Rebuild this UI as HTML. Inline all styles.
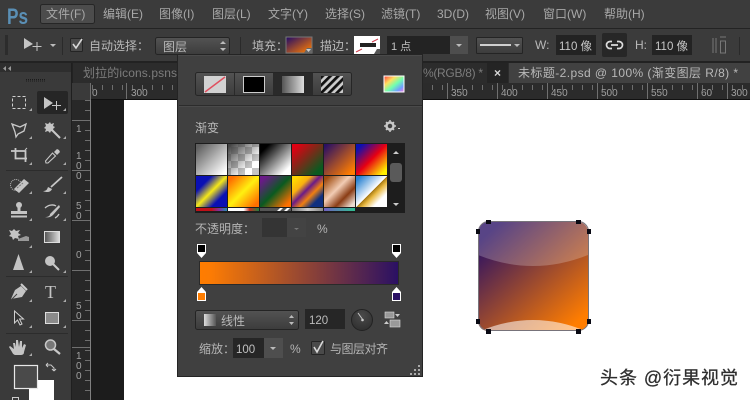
<!DOCTYPE html>
<html><head><meta charset="utf-8">
<style>
html,body{margin:0;padding:0;width:750px;height:400px;overflow:hidden;background:#fff}
svg{display:block}
text{font-family:"Liberation Sans","Noto Sans CJK SC",sans-serif}
.m{font-size:12px;fill:#a8a8a8}
.t{font-size:12px;fill:#b8b8b8}
.r{font-size:10px;fill:#a0a0a0}
.ic{fill:#c4c4c4}
</style></head><body>
<svg width="750" height="400" viewBox="0 0 750 400" xmlns="http://www.w3.org/2000/svg">
<defs>
<pattern id="tickH" x="92" y="0" width="10" height="18" patternUnits="userSpaceOnUse"><rect x="0" y="13" width="1" height="5" fill="#6e6e6e"/></pattern>
<pattern id="tickV" x="0" y="100" width="18" height="10" patternUnits="userSpaceOnUse"><rect x="13" y="0" width="5" height="1" fill="#6e6e6e"/></pattern>
<pattern id="chk" width="14" height="14" patternUnits="userSpaceOnUse"><rect width="14" height="14" fill="#fff"/><rect width="7" height="7" fill="#c4c4c4"/><rect x="7" y="7" width="7" height="7" fill="#c4c4c4"/></pattern>
<pattern id="hatch" width="5.500" height="5.500" patternUnits="userSpaceOnUse" patternTransform="rotate(45)"><rect width="5.500" height="5.500" fill="#ccc"/><rect width="2.800" height="5.500" fill="#111"/></pattern>
<linearGradient id="g1" x1="0" y1="0" x2="1" y2="1"><stop offset=".08" stop-color="#606060"/><stop offset=".92" stop-color="#fff"/></linearGradient>
<linearGradient id="g2" x1="0" y1="0" x2="1" y2="1"><stop offset=".05" stop-color="#444"/><stop offset=".72" stop-color="#444" stop-opacity="0"/></linearGradient>
<linearGradient id="g3" x1="0" y1="0" x2="1" y2="1"><stop offset=".15" stop-color="#000"/><stop offset=".85" stop-color="#fff"/></linearGradient>
<linearGradient id="g4" x1="0" y1="0" x2="1" y2="1"><stop offset=".1" stop-color="#e00012"/><stop offset=".85" stop-color="#0a5a20"/></linearGradient>
<linearGradient id="g5" x1="0" y1="0" x2="1" y2="1"><stop offset=".05" stop-color="#2a1064"/><stop offset=".9" stop-color="#ff7d00"/></linearGradient>
<linearGradient id="g6" x1="0" y1="0" x2="1" y2="1"><stop offset=".1" stop-color="#0a10b4"/><stop offset=".5" stop-color="#e80012"/><stop offset=".9" stop-color="#fff000"/></linearGradient>
<linearGradient id="g7b" x1="0" y1="0" x2="1" y2="1"><stop offset=".25" stop-color="#0a10b4"/><stop offset=".5" stop-color="#f5e818"/><stop offset=".75" stop-color="#0a10b4"/></linearGradient>
<linearGradient id="g8" x1="0" y1="0" x2="1" y2="1"><stop offset=".1" stop-color="#ff7000"/><stop offset=".5" stop-color="#fff010"/><stop offset=".9" stop-color="#ff7000"/></linearGradient>
<linearGradient id="g9" x1="0" y1="0" x2="1" y2="1"><stop offset=".1" stop-color="#6a1a88"/><stop offset=".5" stop-color="#0a5a20"/><stop offset=".9" stop-color="#ff7000"/></linearGradient>
<linearGradient id="g10" x1="0" y1="0" x2="1" y2="1"><stop offset=".1" stop-color="#ffd800"/><stop offset=".3" stop-color="#f8b010"/><stop offset=".46" stop-color="#6a1a88"/><stop offset=".62" stop-color="#f08010"/><stop offset=".8" stop-color="#103080"/><stop offset="1" stop-color="#103080"/></linearGradient>
<linearGradient id="g11" x1="0" y1="0" x2="1" y2="1"><stop offset=".08" stop-color="#a04c10"/><stop offset=".42" stop-color="#f2ccb4"/><stop offset=".68" stop-color="#8a3c14"/><stop offset=".92" stop-color="#ecdcd0"/></linearGradient>
<linearGradient id="g12" x1="0" y1="0" x2="1" y2="1"><stop offset=".08" stop-color="#2a82d2"/><stop offset=".5" stop-color="#fff"/><stop offset=".5" stop-color="#a07410"/><stop offset=".6" stop-color="#e8b840"/><stop offset=".78" stop-color="#fff"/></linearGradient>
<linearGradient id="barG"><stop offset="0" stop-color="#ff7d00"/><stop offset=".06" stop-color="#fb7b04"/><stop offset="1" stop-color="#2a1064"/></linearGradient>
<linearGradient id="shape" x1="1" y1="1" x2="0" y2="0"><stop offset=".05" stop-color="#ff7d00"/><stop offset=".95" stop-color="#2a1064"/></linearGradient>
<linearGradient id="shape2" x1=".92" y1=".95" x2=".1" y2=".05"><stop offset=".03" stop-color="#ff7d00"/><stop offset=".97" stop-color="#2a1064"/></linearGradient>
<linearGradient id="grayS" x1="0" x2="1"><stop offset="0" stop-color="#555"/><stop offset="1" stop-color="#ddd"/></linearGradient>
<linearGradient id="rainbow" x1="0" y1="0" x2="1" y2="1"><stop offset="0" stop-color="#ff3d3d"/><stop offset=".3" stop-color="#ffe060"/><stop offset=".55" stop-color="#70ffb0"/><stop offset=".8" stop-color="#70a0ff"/><stop offset="1" stop-color="#ff70e0"/></linearGradient>
<linearGradient id="btn" x1="0" y1="0" x2="0" y2="1"><stop offset="0" stop-color="#535353"/><stop offset="1" stop-color="#3c3c3c"/></linearGradient>
<linearGradient id="rb3" x1="0" x2="1"><stop offset="0" stop-color="#c01018"/><stop offset=".5" stop-color="#c01018"/><stop offset=".75" stop-color="#8030a0"/><stop offset="1" stop-color="#2090b0"/></linearGradient>
<linearGradient id="rb4" x1="0" x2="1"><stop offset="0" stop-color="#fff"/><stop offset=".5" stop-color="#fff"/><stop offset=".7" stop-color="#c03020"/><stop offset="1" stop-color="#208040"/></linearGradient>
<linearGradient id="rb6" x1="0" x2="1"><stop offset="0" stop-color="#777"/><stop offset=".5" stop-color="#ccc"/><stop offset="1" stop-color="#888"/></linearGradient>
<linearGradient id="rb7" x1="0" x2="1"><stop offset="0" stop-color="#7060c0"/><stop offset="1" stop-color="#30c090"/></linearGradient>
<clipPath id="shapeClip"><rect x="478" y="222" width="110" height="109" rx="10"/></clipPath>
<radialGradient id="dial" cx=".5" cy=".3" r=".8"><stop offset="0" stop-color="#4a4a4a"/><stop offset="1" stop-color="#2c2c2c"/></radialGradient>
</defs>

<rect width="750" height="400" fill="#3a3a3a"/>
<rect width="750" height="28" fill="#3b3b3b"/>
<rect y="28" width="750" height="1" fill="#232323"/>
<text x="7" y="24" font-size="22" font-weight="700" fill="#5a8fb5" textLength="21" lengthAdjust="spacingAndGlyphs">Ps</text>
<rect x="40.500" y="4.500" width="54" height="19" rx="2" fill="#4c4c4c" stroke="#262626"/>
<text class="m" x="46" y="18">文件(F)</text>
<text class="m" x="103" y="18">编辑(E)</text>
<text class="m" x="159" y="18">图像(I)</text>
<text class="m" x="212" y="18">图层(L)</text>
<text class="m" x="268" y="18">文字(Y)</text>
<text class="m" x="325" y="18">选择(S)</text>
<text class="m" x="381" y="18">滤镜(T)</text>
<text class="m" x="437" y="18">3D(D)</text>
<text class="m" x="485" y="18">视图(V)</text>
<text class="m" x="543" y="18">窗口(W)</text>
<text class="m" x="604" y="18">帮助(H)</text>

<rect y="29" width="750" height="33" fill="#3b3b3b"/>
<rect y="61" width="750" height="2" fill="#222"/>
<path d="M5 36h3M5 38h3M5 40h3M5 42h3M5 44h3M5 46h3M5 48h3M5 50h3M5 52h3M5 54h3" stroke="#1e1e1e" stroke-width="1"/>
<path d="M24 38v11l9-5z" class="ic"/>
<path d="M37 42v9M32.500 46.500h9" stroke="#c4c4c4" stroke-width="1" fill="none"/>
<path d="M50 44h6l-3 3z" fill="#bbb"/>
<rect x="62" y="37" width="1" height="18" fill="#2a2a2a"/>
<rect x="70.500" y="38.500" width="12" height="13" rx="1" fill="#4a4a4a" stroke="#242424"/>
<path d="M73 44l3 4 6-9" fill="none" stroke="#d8d8d8" stroke-width="1.600"/>
<text class="t" x="89" y="50">自动选择：</text>
<rect x="155.500" y="37.500" width="74" height="17" rx="2" fill="url(#btn)" stroke="#242424"/>
<text class="t" x="163" y="51">图层</text>
<path d="M220 44l3-3 3 3zM220 48l3 3 3-3z" fill="#bbb"/>
<rect x="240" y="37" width="1" height="18" fill="#2a2a2a"/>
<text class="t" x="252" y="50">填充：</text>
<rect x="286" y="37" width="26" height="16" fill="url(#shape)" stroke="#777" stroke-width="1"/>
<path d="M304 53l3-5h5v5z" fill="#666"/><path d="M306 49h5l-2.500 3z" fill="#ccc"/>
<text class="t" x="320" y="50">描边：</text>
<rect x="354" y="36" width="26" height="18" fill="#fff"/>
<rect x="360" y="43" width="16" height="4" fill="#222"/>
<path d="M356 52l6-3M372 42l6-3" stroke="#d04050" stroke-width="1"/>
<path d="M374 54l3-5h3v5z" fill="#555"/>
<rect x="387" y="36" width="63" height="18" fill="#232323"/>
<text x="391" y="50" font-size="11" fill="#c0c0c0">1 点</text>
<rect x="450" y="36" width="18" height="18" fill="#4e4e4e"/>
<path d="M456 44h6l-3 3z" fill="#bbb"/>
<rect x="476.500" y="37.500" width="46" height="16" rx="1" fill="url(#btn)" stroke="#242424"/>
<rect x="480" y="44" width="31" height="2" fill="#d0d0d0"/>
<path d="M514 44h6l-3 3z" fill="#bbb"/>
<text class="t" x="535" y="49">W:</text>
<rect x="556" y="35" width="40" height="20" fill="#232323"/>
<text x="559" y="50" font-size="11.500" fill="#c8c8c8">110 像</text>
<rect x="602" y="33" width="25" height="24" rx="2" fill="#272727"/>
<path d="M612 41.500h-2a3.500 3.500 0 0 0 0 7h2M617 41.500h2a3.500 3.500 0 0 1 0 7h-2M611 45h7" fill="none" stroke="#dcdcdc" stroke-width="1.700"/>
<text class="t" x="635" y="49">H:</text>
<rect x="652" y="35" width="40" height="20" fill="#232323"/>
<text x="655" y="50" font-size="11.500" fill="#c8c8c8">110 像</text>
<path d="M713 38v15M716 38v15M720.500 41h5v12h-5zM720 37h6" fill="none" stroke="#777"/>
<rect x="739" y="37" width="1" height="18" fill="#2a2a2a"/>

<rect x="0" y="63" width="72" height="9" fill="#2e2e2e"/>
<path d="M6 66l-3 2.500 3 2.500zM11 66l-3 2.500 3 2.500z" fill="#999"/>
<rect x="72" y="63" width="678" height="20" fill="#2c2c2c"/>
<rect x="72" y="63" width="1" height="20" fill="#222"/>
<text x="83" y="77" font-size="12" fill="#7c7c7c" textLength="94">划拉的icons.psns</text>
<text x="423" y="77" font-size="12" fill="#7c7c7c" textLength="60">%(RGB/8) *</text>
<rect x="487" y="63" width="21" height="20" fill="#242424"/>
<text x="494" y="77" font-size="12" fill="#d8d8d8" font-weight="700">×</text>
<rect x="509" y="63" width="241" height="20" fill="#414141"/>
<text x="518" y="77" font-size="12" fill="#b8b8b8" textLength="220">未标题-2.psd @ 100% (渐变图层 R/8) *</text>

<rect x="72" y="83" width="678" height="17" fill="#2b2b2b"/>
<rect x="72" y="83" width="678" height="17" fill="url(#tickH)"/>
<rect x="72" y="83" width="18" height="17" fill="#3a3a3a"/>
<path d="M90.500 83v17M126.500 83v17M447.500 83v17M497.500 83v17M547.500 83v17M597.500 83v17M647.500 83v17M697.500 83v17M727.500 83v17" stroke="#707070"/>
<text class="r" x="92" y="96">0</text><text class="r" x="131" y="96">300</text>
<text class="r" x="451" y="96">350</text><text class="r" x="501" y="96">400</text><text class="r" x="551" y="96">450</text><text class="r" x="601" y="96">500</text><text class="r" x="651" y="96">550</text><text class="r" x="701" y="96">60</text><text class="r" x="731" y="96">300</text>

<rect x="72" y="100" width="19" height="300" fill="#282828"/>
<rect x="72" y="100" width="19" height="300" fill="url(#tickV)"/>
<rect x="90" y="100" width="1" height="300" fill="#808080"/>
<rect x="91" y="100" width="33" height="300" fill="#1c1c1c"/>
<rect x="91" y="99" width="659" height="1" fill="#111"/>
<path d="M72 120.500h18M72 170.500h18M72 220.500h18M72 270.500h18M72 320.500h18M72 347.500h18" stroke="#707070"/>
<g class="r">
<text x="76" y="132">1</text><text x="76" y="159">1</text><text x="76" y="169">0</text><text x="76" y="179">0</text>
<text x="76" y="209">5</text><text x="76" y="219">0</text><text x="76" y="258">0</text>
<text x="76" y="309">5</text><text x="76" y="319">0</text>
<text x="76" y="359">1</text><text x="76" y="369">0</text><text x="76" y="379">0</text>
</g>

<rect x="124" y="100" width="626" height="300" fill="#fff"/>

<rect x="0" y="72" width="71" height="328" fill="#3a3a3a"/>
<rect x="71" y="63" width="1" height="337" fill="#1f1f1f"/>
<path d="M26 79.500h20M26 81h20" stroke="#1b1b1b" stroke-dasharray="1 1"/>
<rect x="37" y="91" width="31" height="23" rx="2" fill="#262626"/>
<path d="M32 111v-3l-3 3zM66 111v-3l-3 3zM32 139v-3l-3 3zM66 139v-3l-3 3zM32 165v-3l-3 3zM66 165v-3l-3 3zM32 194v-3l-3 3zM66 194v-3l-3 3zM32 221v-3l-3 3zM66 221v-3l-3 3zM32 248v-3l-3 3zM32 273v-3l-3 3zM66 273v-3l-3 3zM32 302v-3l-3 3zM66 302v-3l-3 3zM32 328v-3l-3 3zM66 328v-3l-3 3zM32 356v-3l-3 3z" fill="#aaa"/>
<path d="M6 170.500h62M6 276.500h62M6 333.500h62" stroke="#2c2c2c"/>
<rect x="12.500" y="96.500" width="13" height="12" fill="none" stroke="#d0d0d0" stroke-dasharray="3 2"/>
<path d="M44 97v12l9-6z" class="ic"/><path d="M56.500 101v9M52 105.500h9" stroke="#c8c8c8" fill="none"/>
<path d="M12 124l8 3 6-3-2 7-6 3-2 3-1-5z" fill="none" stroke="#c8c8c8" stroke-width="1.300"/>
<path d="M48 124l2-2 1 2 3-1-1 3 2 1-2 2 1 3-3-1-1 2-2-2-3 1 1-3-2-1 2-2-1-3z" class="ic"/><path d="M52 130l8 8" stroke="#c8c8c8" stroke-width="2"/>
<path d="M11 151h14.500v11M15.500 148v10.500H27" fill="none" stroke="#c8c8c8" stroke-width="1.800"/><path d="M25 150l2-2" stroke="#c8c8c8"/>
<path d="M46 163l-.5-2 7-8 3 3-7.500 7z" fill="none" stroke="#c8c8c8" stroke-width="1.100"/><path d="M54 152l3-3 2 1 1 2-3 3z" class="ic"/>
<circle cx="16" cy="185" r="5.500" fill="none" stroke="#bbb" stroke-dasharray="1 1"/>
<path d="M14 189l10-10 5 4-10 10z" class="ic"/><path d="M17 188l6-5" stroke="#777" stroke-dasharray="2 1"/>
<path d="M51 187l11-10" stroke="#c8c8c8" stroke-width="1.800"/><path d="M43 191c3 0 4-1 5-4l4 2c-1 3-5 4-9 2z" class="ic"/>
<circle cx="19" cy="205" r="3" class="ic"/><path d="M17.500 207h3v4h-3zM11 211h16v3H11zM11 215.500h16v2H11z" class="ic"/>
<path d="M45 208c3-3 8-4 11-2M59 214c-1 2-2 3-4 4" fill="none" stroke="#c8c8c8" stroke-width="1.300"/><path d="M45 217c3 0 5-1 5-3l9-9 1 2-7 8c-2 2-5 3-8 2z" class="ic"/>
<path d="M9 230l3 1 2-2 2 2 4-1-2 3 3 2-3 1 1 3-4-1-2 2-1-3-3-1 2-2z" class="ic"/><path d="M18 239l8-3 3 1v4H18z" fill="#999"/>
<rect x="44.500" y="231.500" width="15" height="11" fill="url(#grayS)" stroke="#ddd"/>
<path d="M18.500 254l5.500 16H13z" class="ic"/>
<circle cx="50" cy="261" r="5" class="ic"/><path d="M53 264l6 6" stroke="#c8c8c8" stroke-width="2"/>
<path d="M11 299l4-9 6-4 5 5-4 6z" class="ic"/><path d="M21 284l6 6" stroke="#ccc" stroke-width="2"/><path d="M11 300l6-6" stroke="#444"/>
<text x="45" y="298" font-size="18" fill="#c4c4c4" style="font-family:'Liberation Serif',serif">T</text>
<path d="M14.500 311v12l3-3 2.500 5 2-1-2.500-5h4z" fill="#333" stroke="#d0d0d0"/>
<rect x="45.500" y="312.500" width="13" height="11" fill="#8a8a8a" stroke="#ddd"/>
<path d="M10 346l4 3-1-6 2 0 1 4 0-7 2 0 1 7 1-6 2 0 0 7 2-4 2 1-2 7c0 3-2 3-5 3h-3c-2 0-3-1-4-3l-3-5z" class="ic"/>
<circle cx="50.500" cy="345" r="5" fill="#777" stroke="#c8c8c8" stroke-width="1.500"/><path d="M54 349l6 5" stroke="#c8c8c8" stroke-width="2.200"/>
<rect x="29" y="380" width="25" height="20" fill="#fff"/>
<rect x="14.500" y="365.500" width="23" height="23" fill="#4a4a4a" stroke="#e8e8e8" stroke-width="1.200"/>
<path d="M46 365h5l3 3v3M46 365l2-2M46 365l2 2M54 371l-2-2M54 371l2-2" fill="none" stroke="#c8c8c8"/>
<rect x="12.500" y="397.500" width="6" height="5" fill="none" stroke="#ccc"/>

<rect x="177.500" y="54.500" width="245" height="322" fill="#404040" stroke="#242424"/>
<rect x="178" y="55" width="244" height="1" fill="#4a4a4a"/>
<rect x="195.500" y="72.500" width="156" height="23" rx="2" fill="url(#btn)" stroke="#262626"/>
<rect x="273" y="73" width="39" height="22" fill="#2a2a2a"/>
<path d="M234.500 73v22M273.500 73v22M312.500 73v22" stroke="#2a2a2a"/>
<rect x="204" y="76" width="22" height="17" fill="#d2d2d2"/>
<path d="M205 92l20-15" stroke="#e0505f" stroke-width="1.500"/>
<rect x="243.500" y="76.500" width="21" height="16" fill="#000" stroke="#ccc"/>
<rect x="282" y="76" width="22" height="17" fill="url(#grayS)"/>
<rect x="321" y="76" width="22" height="17" fill="url(#hatch)"/>
<rect x="384" y="76" width="20" height="16" fill="url(#rainbow)" stroke="#fff" stroke-width="1"/>
<rect x="179" y="105" width="243" height="1" fill="#2c2c2c"/>
<rect x="179" y="106" width="243" height="1" fill="#4a4a4a"/>
<text x="195" y="132" font-size="12" fill="#b8b8b8">渐变</text>
<circle cx="390" cy="126" r="3.500" fill="none" stroke="#c8c8c8" stroke-width="2.500"/>
<path d="M390 120v2M390 130v2M384 126h2M394 126h2M386 122l1.500 1.500M394 122l-1.500 1.500M386 130l1.500-1.500M394 130l-1.500-1.500" stroke="#c8c8c8" stroke-width="1.500"/>
<rect x="398" y="128" width="2" height="1" fill="#ccc"/>
<rect x="195" y="143" width="210" height="70" fill="#1d1d1d"/>
<rect x="196" y="144" width="31" height="31" fill="url(#g1)"/>
<rect x="228" y="144" width="31" height="31" fill="url(#chk)"/><rect x="228" y="144" width="31" height="31" fill="url(#g2)"/>
<rect x="260" y="144" width="31" height="31" fill="url(#g3)"/>
<rect x="292" y="144" width="31" height="31" fill="url(#g4)"/>
<rect x="324" y="144" width="31" height="31" fill="url(#g5)"/>
<rect x="356" y="144" width="31" height="31" fill="url(#g6)"/>
<rect x="196" y="176" width="31" height="31" fill="url(#g7b)"/>
<rect x="228" y="176" width="31" height="31" fill="url(#g8)"/>
<rect x="260" y="176" width="31" height="31" fill="url(#g9)"/>
<rect x="292" y="176" width="31" height="31" fill="url(#g10)"/>
<rect x="324" y="176" width="31" height="31" fill="url(#g11)"/>
<rect x="356" y="176" width="31" height="31" fill="url(#g12)"/>
<rect x="196" y="208" width="31" height="3" fill="url(#rb3)"/>
<rect x="228" y="208" width="31" height="3" fill="url(#rb4)"/>
<rect x="260" y="208" width="31" height="3" fill="#555"/><path d="M277 211l3-3h3l-3 3zM284 211l3-3h3l-3 3z" fill="#fff"/>
<rect x="292" y="208" width="31" height="3" fill="url(#rb6)"/>
<rect x="324" y="208" width="31" height="3" fill="url(#rb7)"/>
<rect x="390" y="163" width="12" height="19" rx="3" fill="#5a5a5a"/>
<path d="M393 154l3-3 3 3z" fill="#ccc"/><path d="M393 203l3 3 3-3z" fill="#ccc"/>
<text x="195" y="233" font-size="12" fill="#b4b4b4">不透明度：</text>
<rect x="262" y="218" width="44" height="19" fill="#343434"/>
<rect x="287" y="218" width="19" height="19" fill="#434343"/>
<path d="M294 228h5l-2.500 2z" fill="#777"/>
<text x="317" y="233" font-size="12" fill="#b4b4b4">%</text>
<g stroke="#fff" stroke-width="1"><path d="M197.500 244.500h8v8h-8z" fill="#000"/><path d="M392.500 244.500h8v8h-8z" fill="#000"/></g>
<path d="M197 253h9l-4.500 5zM392 253h9l-4.500 5z" fill="#fff"/>
<rect x="199.500" y="261.500" width="199" height="23" fill="url(#barG)" stroke="#2a2a2a"/>
<path d="M197 292l4.500-5 4.500 5zM392 292l4.500-5 4.500 5z" fill="#fff"/>
<rect x="197.500" y="292.500" width="8" height="8" fill="#ff7d00" stroke="#fff"/>
<rect x="392.500" y="292.500" width="8" height="8" fill="#2a1064" stroke="#fff"/>
<rect x="195.500" y="310.500" width="103" height="19" rx="2" fill="url(#btn)" stroke="#242424"/>
<rect x="204" y="314" width="12" height="12" fill="url(#grayS)" transform="rotate(180 210 320)"/>
<text x="221" y="325" font-size="12" fill="#b8b8b8">线性</text>
<path d="M289 318l2.500-3 2.500 3zM289 322l2.500 3 2.500-3z" fill="#bbb"/>
<rect x="305" y="309" width="40" height="20" fill="#262626"/>
<text x="309" y="324" font-size="11.500" fill="#bbb">120</text>
<circle cx="362" cy="320" r="10.500" fill="url(#dial)" stroke="#222"/>
<path d="M363 320l-5-7" stroke="#c8c8c8"/><circle cx="362.500" cy="320" r="1.300" fill="#ccc"/>
<rect x="385" y="312" width="9" height="6" fill="#999" stroke="#ddd" stroke-width=".6"/>
<path d="M395 314h5l-2.500 3z" fill="#ccc"/>
<rect x="390" y="320" width="10" height="7" fill="#999" stroke="#ddd" stroke-width=".6"/>
<path d="M389 324h-5l2.500-3z" fill="#ccc"/>
<text x="199" y="353" font-size="12" fill="#b4b4b4">缩放：</text>
<rect x="233" y="338" width="31" height="20" fill="#262626"/>
<rect x="264" y="338" width="19" height="20" fill="#4e4e4e"/>
<path d="M270 347h6l-3 3z" fill="#bbb"/>
<text x="236" y="353" font-size="11.500" fill="#c0c0c0">100</text>
<text x="290" y="353" font-size="12" fill="#b4b4b4">%</text>
<rect x="311.500" y="341.500" width="13" height="13" rx="1" fill="#4a4a4a" stroke="#242424"/>
<path d="M314 347l3 5 6-11" fill="none" stroke="#d8d8d8" stroke-width="1.600"/>
<text x="330" y="353" font-size="12" fill="#b4b4b4" textLength="58">与图层对齐</text>
<path d="M418 365h2v2h-2zM414 369h2v2h-2zM418 369h2v2h-2zM410 373h2v2h-2zM414 373h2v2h-2zM418 373h2v2h-2z" fill="#aaa"/>

<g clip-path="url(#shapeClip)">
<rect x="478" y="222" width="110" height="109" fill="url(#shape2)"/>
<path d="M478 255q55 22 110 0V222H478z" fill="#fff" fill-opacity=".22"/>
<path d="M478 332q55-24 110 0v2H478z" fill="#fff" fill-opacity=".55"/>
</g>
<rect x="478.500" y="221.500" width="110" height="109" rx="10" fill="none" stroke="#77737a"/>
<path d="M486 220h5v4h-5zM576 220h5v4h-5zM476 229h4v5h-4zM587 229h4v5h-4zM476 319h4v5h-4zM587 319h4v5h-4zM486 329h5v5h-5zM576 329h5v5h-5z" fill="#0a0a14"/>

<text x="600" y="384" font-size="18" fill="#2e2e2e" stroke="#2e2e2e" stroke-width=".25" textLength="138">头条 @衍果视觉</text>
</svg>
</body></html>
